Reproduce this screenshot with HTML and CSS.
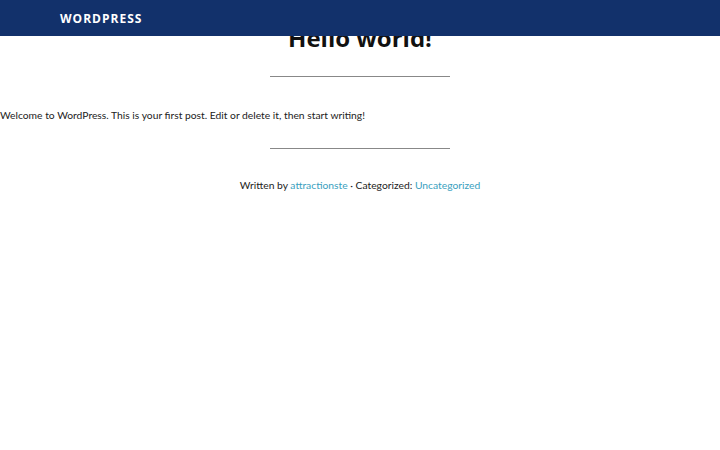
FILE: index.html
```html
<!DOCTYPE html>
<html>
<head>
<meta charset="utf-8">
<link rel="stylesheet" href="styles.css">
</head>
<body>
<header class="site-header">
  <div class="brand">WORDPRESS</div>
</header>
<main class="content">
  <h1 class="post-title">Hello world!</h1>
  <hr class="divider">
  <p class="post-body">Welcome to WordPress. This is your first post. Edit or delete it, then start writing!</p>
  <hr class="divider">
  <p class="post-meta">Written by <a href="#">attractionste</a> · Categorized: <a href="#">Uncategorized</a></p>
</main>
</body>
</html>
```
FILE: styles.css
```css
html, body {
  margin: 0;
  padding: 0;
  background: #fff;
}
body {
  font-family: "Lato", "Noto Sans", sans-serif;
  color: #222;
}
.site-header {
  position: fixed;
  top: 0;
  left: 0;
  right: 0;
  height: 36px;
  background: #12316b;
  display: flex;
  align-items: center;
  padding-left: 60px;
  z-index: 10;
}
.brand {
  font-family: "Open Sans", sans-serif;
  font-weight: 700;
  font-size: 12px;
  letter-spacing: 1px;
  color: #fff;
}
.content {
  display: flex;
  flex-direction: column;
  align-items: center;
}
.post-title {
  font-family: "Open Sans", sans-serif;
  font-weight: 700;
  font-size: 24px;
  line-height: 32px;
  margin: 22px 0 0;
  color: #111;
}
.divider {
  width: 180px;
  border: 0;
  border-top: 1px solid #888;
  margin: 22px 0 0;
}
.post-body {
  align-self: stretch;
  margin: 30px 0 0;
  font-size: 10.3px;
  line-height: 16px;
}
.post-body + .divider {
  margin-top: 25px;
}
.post-meta {
  margin: 28px 0 0;
  font-size: 10.3px;
  line-height: 16px;
}
.post-meta a {
  color: #3a9fc0;
  text-decoration: none;
}
```
